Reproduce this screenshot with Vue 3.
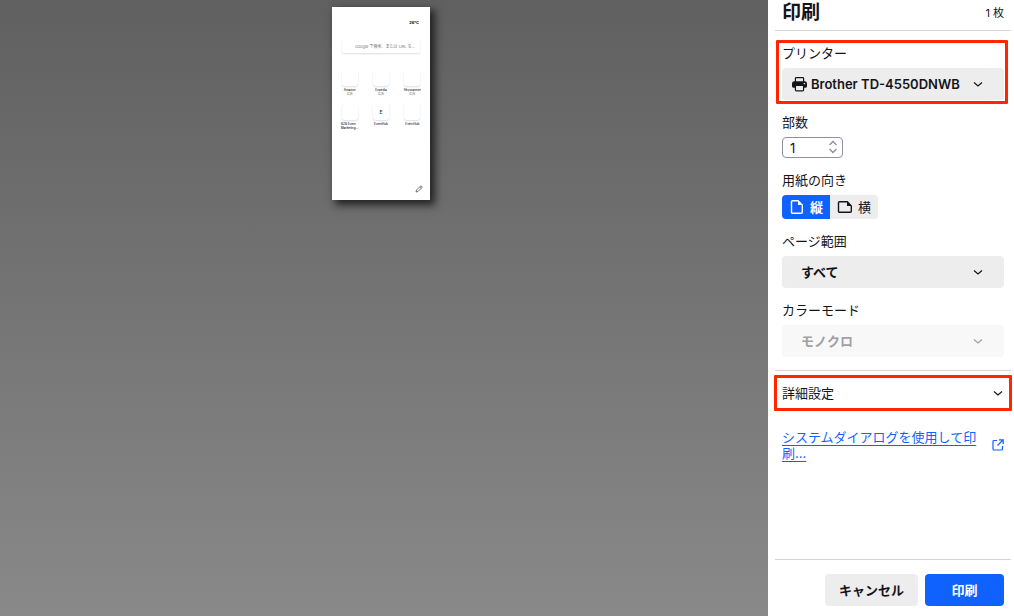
<script setup>
import { ref } from 'vue'

const copies = ref(1)
const orientation = ref('portrait')
const shortcuts = [
  { name: 'Amazon', note: '広告' },
  { name: 'Expedia', note: '広告' },
  { name: 'Skyscanner', note: '広告' },
  { name: 'B2B Event', more: 'Marketing...' },
  { name: 'EventHub', letter: 'E' },
  { name: 'EventHub' },
]
</script>

<template>
  <div class="dialog">
    <main class="preview">
      <div class="sheet">
        <div class="weather">26°C</div>
        <div class="search">Google で検索、または URL を...</div>
        <div class="tiles">
          <div v-for="(s, i) in shortcuts" :key="i" class="tile">
            <div class="thumb">{{ s.letter }}</div>
            <div class="name" :class="{ long: s.more }">{{ s.name }}<template v-if="s.more"><br />{{ s.more }}</template></div>
            <div v-if="s.note" class="note">{{ s.note }}</div>
          </div>
        </div>
        <svg class="pencil" viewBox="0 0 8 8" fill="none" stroke="#444" stroke-width=".7">
          <path d="M1 7 1.500 5 5.300 1.200Q6 .6 6.700 1.300T6.800 2.700L3 6.500ZM4.600 1.900 6.100 3.400" />
        </svg>
      </div>
    </main>

    <form class="panel" @submit.prevent>
      <header class="head">
        <h1>印刷</h1>
        <span class="count">1 枚</span>
      </header>

      <div class="field marked">
        <label for="printer">プリンター</label>
        <div class="drop">
          <svg class="printer" viewBox="0 0 16 16">
            <path fill="#15141a" d="M3 5V2A1.500 1.500 0 0 1 4.500 .5h7A1.500 1.500 0 0 1 13 2V5h.5A2.500 2.500 0 0 1 16 7.500v3A1.500 1.500 0 0 1 14.500 12H13v2.500a1.500 1.500 0 0 1-1.500 1.500h-7A1.500 1.500 0 0 1 3 14.500V12H1.500A1.500 1.500 0 0 1 0 10.500v-3A2.500 2.500 0 0 1 2.500 5Z" />
            <path fill="#ededed" d="M4.300 1.800h7.400V5H4.300ZM4.300 10h7.400v4.700H4.300ZM12.500 7h1.500v1.300h-1.500Z" />
          </svg>
          <select id="printer" class="with-icon"><option>Brother TD-4550DNWB</option></select>
          <svg class="chev" viewBox="0 0 10 10"><path d="M1 3.500 5 7 9 3.500" /></svg>
        </div>
      </div>

      <div class="field">
        <label for="copies">部数</label>
        <div class="number">
          <input id="copies" v-model="copies" type="number" min="1" />
          <svg viewBox="0 0 10 14"><path d="M1.500 5 5 1.500 8.500 5M1.500 9 5 12.500 8.500 9" /></svg>
        </div>
      </div>

      <fieldset class="field">
        <legend>用紙の向き</legend>
        <div class="toggle">
          <label :class="{ on: orientation === 'portrait' }">
            <input v-model="orientation" type="radio" name="orientation" value="portrait" />
            <svg viewBox="0 0 16 16">
              <path class="line" d="M3.500 1.700h5.500L13.300 6v7.300a1 1 0 0 1-1 1H3.500a1 1 0 0 1-1-1V2.700a1 1 0 0 1 1-1Z" />
              <path class="fold" d="M9 1.500v4.500h4.500Z" />
            </svg>
            縦
          </label>
          <label :class="{ on: orientation === 'landscape' }">
            <input v-model="orientation" type="radio" name="orientation" value="landscape" />
            <svg viewBox="0 0 16 16">
              <path class="line" d="M2.500 2.700h7.800L14.300 7v5.300a1 1 0 0 1-1 1H2.500a1 1 0 0 1-1-1V3.700a1 1 0 0 1 1-1Z" />
              <path class="fold" d="M10 2.500v4.500h4.500Z" />
            </svg>
            横
          </label>
        </div>
      </fieldset>

      <div class="field">
        <label for="range">ページ範囲</label>
        <div class="drop">
          <select id="range"><option>すべて</option></select>
          <svg class="chev" viewBox="0 0 10 10"><path d="M1 3.500 5 7 9 3.500" /></svg>
        </div>
      </div>

      <div class="field">
        <label for="color">カラーモード</label>
        <div class="drop off">
          <select id="color" disabled><option>モノクロ</option></select>
          <svg class="chev" viewBox="0 0 10 10"><path d="M1 3.500 5 7 9 3.500" /></svg>
        </div>
      </div>

      <div class="advanced">
        <button type="button" class="more">
          詳細設定
          <svg viewBox="0 0 10 10"><path d="M1 3.500 5 7 9 3.500" /></svg>
        </button>
      </div>

      <div class="system">
        <a href="#">システムダイアログを使用して印刷...</a>
        <svg viewBox="0 0 12 12"><path d="M5 1.500H2A1 1 0 0 0 1 2.500V10a1 1 0 0 0 1 1h7.500a1 1 0 0 0 1-1V7M7 .8h4.200V5M11 1 5.500 6.500" /></svg>
      </div>

      <footer class="foot">
        <button type="button" class="cancel">キャンセル</button>
        <button type="submit" class="print">印刷</button>
      </footer>
    </form>
  </div>
</template>

<style>
body {
  margin: 0;
}
</style>

<style scoped>
* {
  box-sizing: border-box;
}
.dialog {
  display: flex;
  min-height: 100vh;
  font: 13px/16px Inter, "Noto Sans CJK JP", sans-serif;
  color: #15141a;
}
.preview {
  flex: 1;
  display: flex;
  justify-content: center;
  align-items: flex-start;
  padding: 7px 6px 7px 0;
  background: linear-gradient(#606060, #898989);
}
.sheet {
  display: flex;
  flex-direction: column;
  width: 98px;
  height: 193px;
  padding: 13px 2px 7px;
  background: #fff;
  box-shadow: 4px 4px 8px 1px #222;
}
.weather {
  padding-right: 9px;
  font-size: 4px;
  line-height: 6px;
  font-weight: 700;
  text-align: right;
}
.search {
  height: 13px;
  margin: 14px 8px 17px;
  padding-left: 8px;
  border-radius: 2px;
  box-shadow: 0 1px 2px #ddd;
  font-size: 4px;
  line-height: 14px;
  color: #777;
  text-align: center;
  white-space: nowrap;
}
.tiles {
  display: grid;
  grid-template-columns: repeat(3, 1fr);
  grid-auto-rows: 34px;
}
.tile {
  display: flex;
  flex-direction: column;
  align-items: center;
  font-size: 3px;
  line-height: 4px;
  white-space: nowrap;
}
.thumb {
  width: 16px;
  height: 16px;
  margin-bottom: 2px;
  border-radius: 3px;
  box-shadow: 0 1px 2px #ddd;
  font-size: 5px;
  line-height: 16px;
  text-align: center;
}
.name {
  font-weight: 500;
}
.long {
  text-align: left;
}
.note {
  color: #777;
  line-height: 5px;
}
.pencil {
  width: 8px;
  height: 8px;
  margin: auto 5px 0 auto;
}
.panel {
  display: flex;
  flex-direction: column;
  width: 246px;
  padding: 0 3px 0 7px;
  background: #fff;
}
.head {
  display: flex;
  justify-content: space-between;
  align-items: center;
  height: 31px;
  margin-bottom: 9px;
  padding: 0 7px 5px;
  border-bottom: 1px solid #d5d5d8;
}
h1 {
  margin: 0;
  font-size: 19px;
  line-height: 24px;
  font-weight: 700;
}
.count {
  font-size: 11px;
}
.field {
  display: flex;
  flex-direction: column;
  gap: 7px;
  margin: 0 7px 14px;
  padding: 0;
  border: 0;
}
.marked {
  margin: 0 3px 10px 1px;
  padding: 2px 1px 1px 3px;
  border: 3px solid #ff2600;
  border-radius: 1px;
}
legend {
  margin-bottom: 7px;
  padding: 0;
}
.drop {
  position: relative;
  color: #15141a;
}
.drop select {
  display: block;
  width: 100%;
  height: 32px;
  padding: 0 40px 0 19px;
  border: 0;
  border-radius: 4px;
  appearance: none;
  background: #ededed;
  color: inherit;
  font: inherit;
  font-weight: 600;
  opacity: 1;
}
.drop .with-icon {
  padding: 0 28px 0 29px;
}
.drop.off {
  color: #a1a1a3;
}
.drop.off select {
  background: #f8f8f8;
}
.chev {
  position: absolute;
  right: 21px;
  top: 11px;
  width: 10px;
  height: 10px;
  pointer-events: none;
}
.chev path,
.more path {
  fill: none;
  stroke: currentColor;
  stroke-width: 1.2;
}
.printer {
  position: absolute;
  left: 10px;
  top: 8px;
  width: 15px;
  height: 16px;
  pointer-events: none;
}
.number {
  position: relative;
  width: 61px;
}
.number input {
  display: block;
  width: 100%;
  height: 21px;
  padding: 0 20px 0 7px;
  border: 1px solid #8f8f9d;
  border-radius: 4px;
  appearance: textfield;
  background: #fff;
  color: inherit;
  font: inherit;
}
.number input::-webkit-inner-spin-button {
  appearance: none;
}
.number svg {
  position: absolute;
  right: 5px;
  top: 3px;
  width: 10px;
  height: 14px;
  fill: none;
  stroke: #8f8f9d;
  stroke-width: 1.4;
  pointer-events: none;
}
.toggle {
  display: flex;
}
.toggle label {
  position: relative;
  display: flex;
  align-items: center;
  gap: 5px;
  width: 48px;
  height: 24px;
  padding-left: 7px;
  border-radius: 0 4px 4px 0;
  background: #ededed;
}
.toggle label:first-child {
  border-radius: 4px 0 0 4px;
}
.toggle .on {
  background: #0f62fe;
  color: #fff;
  font-weight: 600;
}
.toggle input {
  position: absolute;
  inset: 0;
  margin: 0;
  opacity: 0;
}
.toggle svg {
  width: 16px;
  height: 16px;
}
.line {
  fill: none;
  stroke: currentColor;
  stroke-width: 1.4;
}
.fold {
  fill: currentColor;
}
.advanced {
  margin: -1px 0 18px;
  padding-top: 4px;
  border-top: 1px solid #d5d5d8;
}
.more {
  display: flex;
  justify-content: space-between;
  align-items: center;
  width: calc(100% + 2px);
  height: 36px;
  margin-left: -1px;
  padding: 0 6px 0 5px;
  border: 3px solid #ff2600;
  border-radius: 1px;
  background: #fff;
  color: inherit;
  font: inherit;
}
.more svg {
  width: 10px;
  height: 10px;
}
.system {
  display: flex;
  align-items: center;
  justify-content: space-between;
  margin: 0 7px;
  color: #0f62fe;
}
.system a {
  width: 196px;
  color: inherit;
  text-underline-offset: 3px;
  word-break: break-all;
}
.system svg {
  width: 12px;
  height: 12px;
  fill: none;
  stroke: currentColor;
  stroke-width: 1.2;
}
.foot {
  display: flex;
  justify-content: flex-end;
  gap: 7px;
  margin-top: auto;
  padding: 14px 7px 10px;
  border-top: 1px solid #d5d5d8;
}
.foot button {
  height: 32px;
  padding: 0 0 1px;
  border: 0;
  border-radius: 4px;
  font: inherit;
  font-weight: 600;
}
.cancel {
  width: 93px;
  background: #ededed;
  color: #15141a;
}
.print {
  width: 79px;
  background: #0f62fe;
  color: #fff;
}
</style>
